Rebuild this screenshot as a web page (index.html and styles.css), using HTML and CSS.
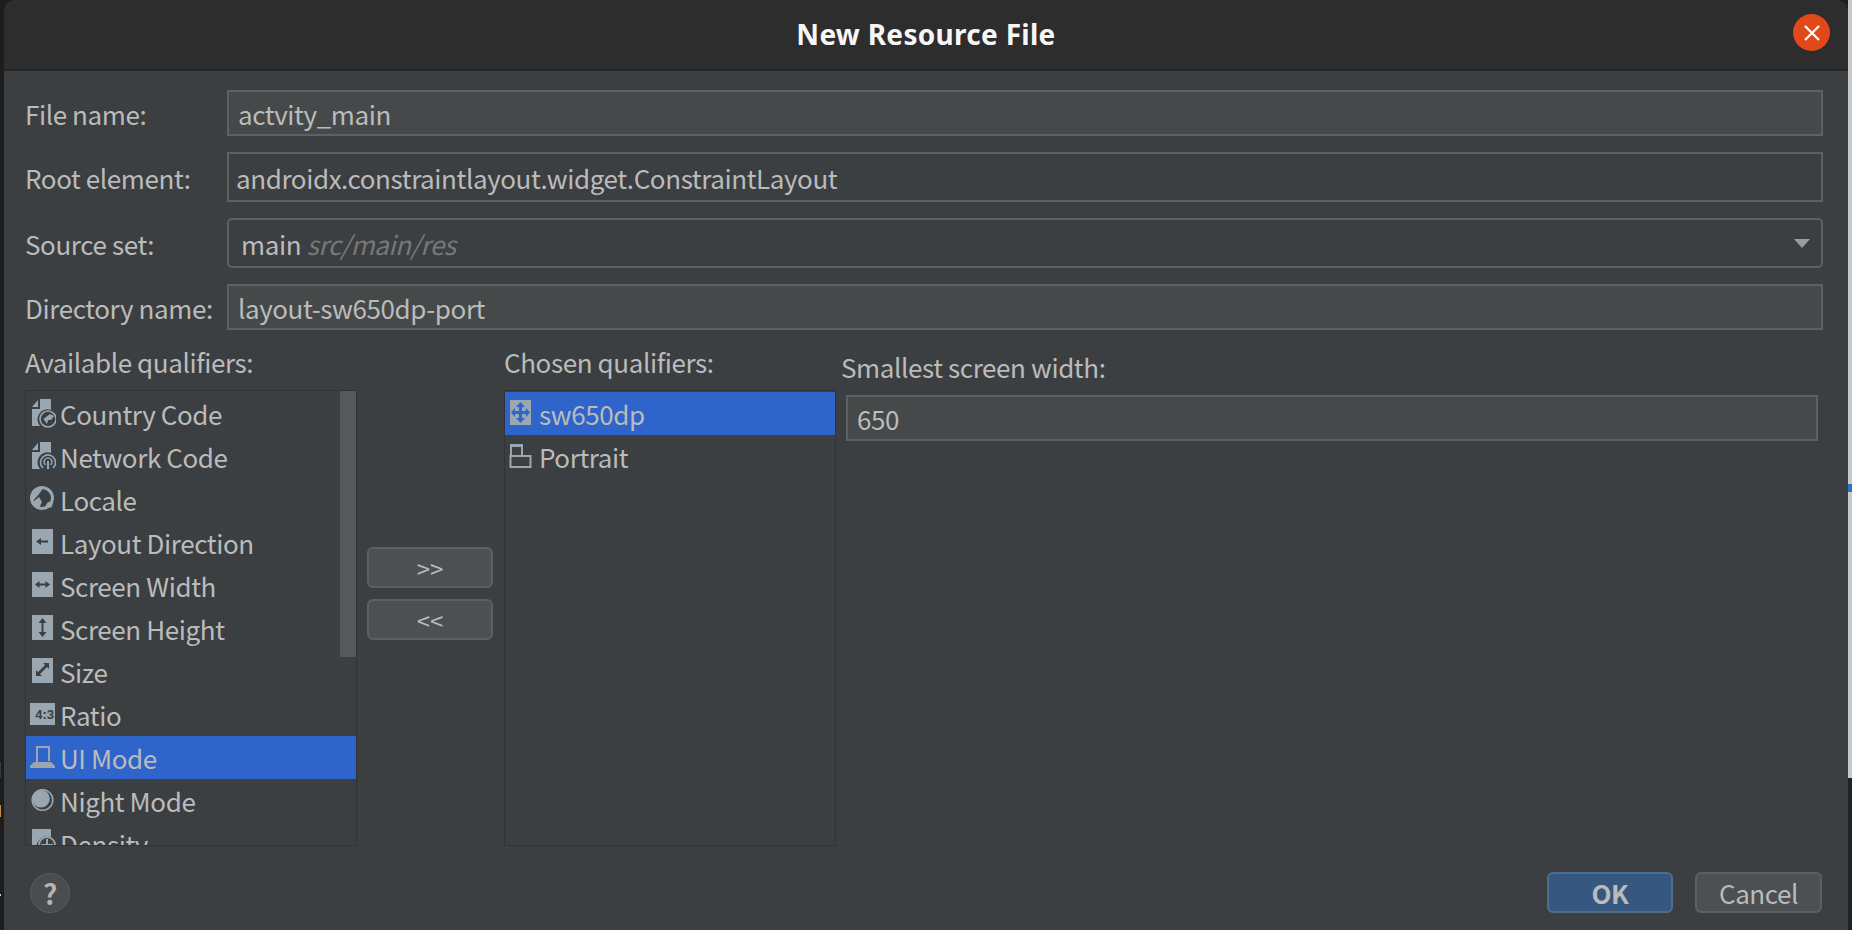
FILE: index.html
```html
<!DOCTYPE html>
<html lang="en">
<head>
  <meta charset="UTF-8">
  <title>New Resource File</title>
  <link rel="stylesheet" href="styles.css">
</head>
<body>
  <div class="desktop">
    <div class="edge-left"></div>
    <div class="dialog">
      <div class="titlebar">
        <span class="title">New Resource File</span>
        <button class="close-btn">
          <svg width="18" height="18" viewBox="0 0 18 18"><path d="M2 2 L16 16 M16 2 L2 16" stroke="#fff" stroke-width="2.2" fill="none"/></svg>
        </button>
      </div>

      <div class="form">
        <div class="row">
          <label class="row-label">File name:</label>
          <div class="field field-filled pad-12">actvity_main</div>
        </div>
        <div class="row row-tall">
          <label class="row-label">Root element:</label>
          <div class="field pad-9">androidx.constraintlayout.widget.ConstraintLayout</div>
        </div>
        <div class="row row-tall">
          <label class="row-label">Source set:</label>
          <div class="field combo pad-14">
            <span>main <i class="hint">src/main/res</i></span>
            <span class="combo-arrow"></span>
          </div>
        </div>
        <div class="row">
          <label class="row-label">Directory name:</label>
          <div class="field field-filled pad-12">layout-sw650dp-port</div>
        </div>
      </div>

      <div class="qualifiers">
        <div class="col-available">
          <div class="col-label">Available qualifiers:</div>
          <div class="list">
            <div class="scroll-thumb"></div>
            <div class="item">
              <svg class="icon" viewBox="0 0 26 30"><path class="ic" d="M2 8 L8 1 V8 Z M10 0 H21 V11 A10 10 0 0 0 10 27 H2 V10 H10 Z"/><circle cx="18" cy="20" r="8" fill="none" stroke="#9aa7b0" stroke-width="1.6"/><path class="ic" d="M13.5 20 L20 15 L24 17 L21 21 L18 21 L17 25 Z"/></svg>
              <span>Country Code</span>
            </div>
            <div class="item">
              <svg class="icon" viewBox="0 0 26 30"><path class="ic" d="M2 8 L8 1 V8 Z M10 0 H21 V11 A10 10 0 0 0 10 27 H2 V10 H10 Z"/><path d="M13 26 A7.5 7.5 0 1 1 23 26" fill="none" stroke="#9aa7b0" stroke-width="1.6"/><path d="M15.5 23 A4 4 0 1 1 20.5 23" fill="none" stroke="#9aa7b0" stroke-width="1.4"/><rect class="ic" x="17" y="19" width="2" height="8"/></svg>
              <span>Network Code</span>
            </div>
            <div class="item">
              <svg class="icon" viewBox="0 0 26 30"><circle cx="12" cy="13" r="10.5" fill="none" stroke="#9aa7b0" stroke-width="3"/><path class="ic" d="M3 16 L9 9 L14 2 L3 5 Z M3 17 L9 12 L12 17 L9 23 L5 21 Z M14 24 L17 18 L23 15 L22 22 Z"/></svg>
              <span>Locale</span>
            </div>
            <div class="item">
              <svg class="icon" viewBox="0 0 26 30"><rect class="ic" x="2" y="1" width="21" height="25"/><path class="cut" d="M6 13.5 L11 10 V12.5 H18 V14.5 H11 V17 Z"/></svg>
              <span>Layout Direction</span>
            </div>
            <div class="item">
              <svg class="icon" viewBox="0 0 26 30"><rect class="ic" x="2" y="1" width="21" height="25"/><path class="cut" d="M5 13.5 L9.5 10 V12.5 H15.5 V10 L20 13.5 L15.5 17 V14.5 H9.5 V17 Z"/></svg>
              <span>Screen Width</span>
            </div>
            <div class="item">
              <svg class="icon" viewBox="0 0 26 30"><rect class="ic" x="2" y="1" width="21" height="25"/><path class="cut" d="M12.5 4 L16.5 9 H13.5 V18 H16.5 L12.5 23 L8.5 18 H11.5 V9 H8.5 Z"/></svg>
              <span>Screen Height</span>
            </div>
            <div class="item">
              <svg class="icon" viewBox="0 0 26 30"><rect class="ic" x="2" y="1" width="21" height="25"/><path class="cut" d="M19 6 V12 L17 10 L10 17 L12 19 H6 V13 L8 15 L15 8 L13 6 Z"/></svg>
              <span>Size</span>
            </div>
            <div class="item">
              <svg class="icon icon-low" viewBox="0 0 26 30"><rect class="ic" x="0" y="0" width="25" height="22"/><text class="ratio-text" x="5" y="15.5">4:3</text></svg>
              <span>Ratio</span>
            </div>
            <div class="item item-selected">
              <svg class="icon icon-low" viewBox="0 0 26 30"><path d="M6 1 H19 V15" fill="none" stroke="#9aa7b0" stroke-width="2"/><path d="M7 1 V16" stroke="#9aa7b0" stroke-width="2"/><path class="ic" d="M4 16 H21 L25 20 V22 H0 V20 Z"/></svg>
              <span>UI Mode</span>
            </div>
            <div class="item">
              <svg class="icon icon-low" viewBox="0 0 26 30"><circle cx="12.5" cy="11" r="10.3" fill="none" stroke="#9aa7b0" stroke-width="1.6"/><circle class="ic" cx="11" cy="9.7" r="8.8"/></svg>
              <span>Night Mode</span>
            </div>
            <div class="item">
              <svg class="icon" viewBox="0 0 26 30"><path class="ic" d="M2 0 H21 V8 A11 11 0 0 0 8 24 H2 Z"/><circle cx="17" cy="16" r="8" fill="none" stroke="#9aa7b0" stroke-width="1.8"/><path d="M17 10 V22 M11 16 H23" stroke="#9aa7b0" stroke-width="2"/></svg>
              <span>Density</span>
            </div>
          </div>
        </div>

        <div class="col-buttons">
          <button class="btn btn-arrow">&gt;&gt;</button>
          <button class="btn btn-arrow">&lt;&lt;</button>
        </div>

        <div class="col-chosen">
          <div class="col-label">Chosen qualifiers:</div>
          <div class="list">
            <div class="item item-selected">
              <svg class="icon icon-chosen" viewBox="0 0 26 30"><rect class="ic" x="1" y="0" width="21" height="25"/><path class="sel-cut" d="M11.5 2 L16 7 H13 V11 H17 V8 L21 12.5 L17 17 V14 H13 V18 H16 L11.5 23 L7 18 H10 V14 H6 V17 L2 12.5 L6 8 V11 H10 V7 H7 Z"/></svg>
              <span>sw650dp</span>
            </div>
            <div class="item">
              <svg class="icon icon-chosen" viewBox="0 0 26 30"><path d="M2 12 V2 H13 V12" fill="none" stroke="#9aa7b0" stroke-width="2"/><rect class="ic" x="1" y="1" width="13" height="3"/><rect x="1.5" y="13" width="20" height="11" fill="none" stroke="#9aa7b0" stroke-width="2"/></svg>
              <span>Portrait</span>
            </div>
          </div>
        </div>

        <div class="col-options">
          <div class="col-label options-label">Smallest screen width:</div>
          <div class="field field-filled options-field pad-10">650</div>
        </div>
      </div>

      <div class="footer">
        <button class="help-btn">?</button>
        <div class="footer-actions">
          <button class="btn btn-ok">OK</button>
          <button class="btn btn-cancel">Cancel</button>
        </div>
      </div>
    </div>
    <div class="edge-right"></div>
  </div>
</body>
</html>
```

FILE: styles.css
```css
* { box-sizing: border-box; }
html, body { margin: 0; height: 100%; overflow: hidden; }
body {
  background: #1d1d1d;
  color: #bbbbbb;
  font-family: "Noto Sans CJK SC", "Noto Sans", sans-serif;
  font-size: 26px;
  letter-spacing: -0.4px;
  white-space: nowrap;
}
button { font-family: inherit; color: inherit; padding: 0; letter-spacing: inherit; }

.desktop { display: flex; width: 1852px; height: 930px; }
.edge-left {
  width: 4px;
  background-color: #1d1d1d;
  background-image: linear-gradient(to bottom, #1d1d1d 0, #1d1d1d 762px, #3b3a38 762px, #3b3a38 778px, #1d1d1d 778px, #1d1d1d 805px, #c98d45 805px, #c98d45 817px, #1d1d1d 817px, #1d1d1d 894px, #d0d0d0 894px, #d0d0d0 896px, #1d1d1d 896px);
  background-size: 1px 100%;
  background-repeat: no-repeat;
}
.edge-right {
  width: 4px;
  background: linear-gradient(to bottom, #c9c9c9 0, #c9c9c9 484px, #2f6fd0 484px, #2f6fd0 492px, #c9c9c9 492px, #c9c9c9 778px, #222222 778px);
}
.dialog {
  width: 1844px;
  background: #3c3f41;
  border-radius: 12px 12px 0 0;
  overflow: hidden;
}

/* title bar */
.titlebar {
  height: 71px;
  padding-bottom: 2px;
  background: #2d2d2d;
  border-bottom: 2px solid #252525;
  display: flex;
  align-items: center;
  justify-content: center;
  position: relative;
}
.title {
  font-family: "Noto Sans", sans-serif;
  font-weight: 700;
  font-size: 28px;
  letter-spacing: 0.3px;
  color: #f6f6f6;
}
.close-btn {
  position: absolute;
  top: 14px;
  right: 18px;
  width: 37px;
  height: 37px;
  border: none;
  border-radius: 50%;
  background: #e2491a;
  display: flex;
  align-items: center;
  justify-content: center;
}

/* top form */
.form {
  display: flex;
  flex-direction: column;
  gap: 16px;
  padding: 19px 25px 0 21px;
}
.row { display: flex; align-items: center; height: 46px; }
.row-tall { height: 50px; }
.row-label { width: 202px; flex: none; }
.field {
  flex: 1;
  height: 100%;
  display: flex;
  align-items: center;
  border: 2px solid #5e6162;
}
.field-filled { background: #45494a; }
.pad-9 { padding-left: 7px; }
.pad-10 { padding-left: 9px; }
.pad-12 { padding-left: 9px; }
.pad-14 { padding-left: 12px; }
.combo {
  border-radius: 5px;
  justify-content: space-between;
  padding-right: 11px;
}
.hint { color: #787878; }
.combo-arrow {
  width: 0;
  height: 0;
  border-left: 8px solid transparent;
  border-right: 8px solid transparent;
  border-top: 9px solid #9a9da0;
}

/* qualifier columns */
.qualifiers { display: flex; margin-top: 10px; padding-left: 21px; }
.col-label { height: 43px; line-height: 43px; margin-bottom: 7px; }
.col-available { width: 332px; }
.col-chosen { width: 332px; margin-left: 11px; }
.col-buttons {
  width: 126px;
  margin-left: 10px;
  padding-top: 207px;
  display: flex;
  flex-direction: column;
  gap: 11px;
}
.col-options { margin-left: 5px; width: 977px; }
.options-label { margin-top: 5px; margin-bottom: 7px; }
.options-field { margin-left: 5px; height: 46px; flex: none; width: 972px; }

.list {
  height: 456px;
  border: 1px solid #313335;
  padding-top: 1px;
  overflow: hidden;
  position: relative;
}
.scroll-thumb {
  position: absolute;
  top: 0;
  right: 0;
  width: 16px;
  height: 266px;
  background: #565859;
}
.item {
  height: 43px;
  display: flex;
  align-items: center;
  gap: 4px;
  padding-left: 4px;
}
.item-selected { background: #2f65ca; }
.icon { width: 26px; height: 30px; flex: none; align-self: flex-start; margin-top: 7px; }
.icon-low { margin-top: 10px; }
.icon-chosen { margin-top: 8px; }
.ic { fill: #9aa7b0; }
.cut { fill: #3c3f41; }
.sel-cut { fill: #2f65ca; }
.ratio-text {
  font-family: "Liberation Mono", monospace;
  font-size: 13px;
  font-weight: 700;
  letter-spacing: -2px;
  fill: #3c3f41;
}

/* buttons */
.btn {
  height: 41px;
  width: 126px;
  border: 2px solid #5e6060;
  border-radius: 6px;
  background: #4c5052;
  font-size: 26px;
  line-height: 1;
  color: #bbbbbb;
}
.btn-arrow { font-size: 24px; letter-spacing: 0; }
.btn-ok {
  background: #365880;
  border-color: #4c708c;
  font-weight: 700;
}
.btn-cancel { width: 127px; }

.footer {
  display: flex;
  justify-content: space-between;
  align-items: center;
  padding: 26px 26px 0 26px;
}
.footer-actions { display: flex; gap: 22px; }
.help-btn {
  width: 40px;
  height: 40px;
  border: 1px solid #5a5d5f;
  border-radius: 50%;
  background: #4a4d4f;
  font-size: 28px;
  font-weight: 700;
  line-height: 1;
  color: #b4b4b4;
}
```
